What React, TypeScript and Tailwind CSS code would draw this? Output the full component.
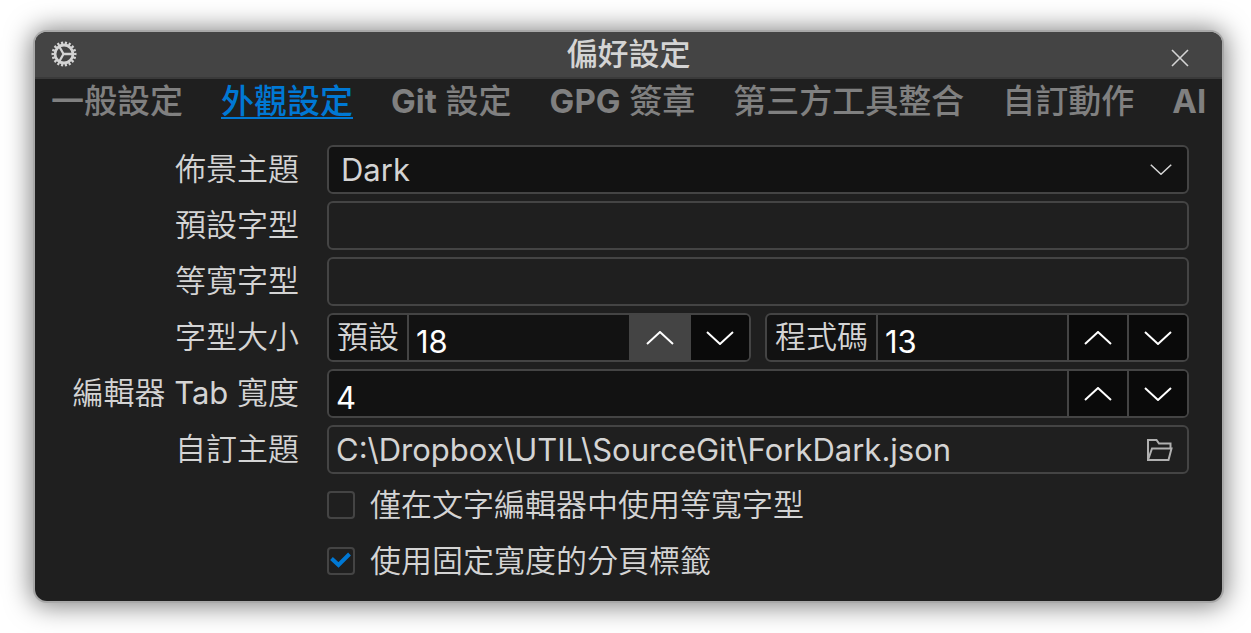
import { useState, type ReactNode } from 'react';

const TABS = ['一般設定', '外觀設定', 'Git 設定', 'GPG 簽章', '第三方工具整合', '自訂動作', 'AI'];

/* Latin words carry a heavier weight than the CJK text around them. */
function Mixed({ text, latin }: { text: string; latin: string }) {
  return (
    <>
      {text.split(/([A-Za-z]+)/).map((part, i) =>
        i % 2 ? (
          <span key={i} className={latin}>
            {part}
          </span>
        ) : (
          part
        ),
      )}
    </>
  );
}

function GearIcon() {
  return (
    <svg viewBox="0 0 26 26" className="size-[26px]" fill="none" stroke="currentColor" aria-hidden="true">
      <circle cx="13" cy="13" r="11" strokeWidth="3" pathLength="72" strokeDasharray="2.200 1.800" strokeDashoffset="1.100" />
      <circle cx="13" cy="13" r="9" strokeWidth="2.800" />
      <path d="M12.500 13H22M12.500 13L8 5M12.500 13L8 21" strokeWidth="2.300" />
    </svg>
  );
}

function Chevron({ up = false, small = false }: { up?: boolean; small?: boolean }) {
  return (
    <svg
      viewBox="0 0 28 14"
      className={small ? 'h-[11px] w-[22px]' : 'h-[14px] w-7'}
      fill="none"
      stroke="currentColor"
      strokeWidth="2"
      aria-hidden="true"
    >
      <path d={up ? 'M1 13L14 1L27 13' : 'M1 1L14 13L27 1'} />
    </svg>
  );
}

function FolderIcon() {
  return (
    <svg viewBox="0 0 26 22" className="h-[22px] w-[26px]" fill="none" stroke="currentColor" strokeWidth="2" aria-hidden="true">
      <path d="M1 21V1H9.500L12 4.500H23.500V9.500M1 21L5 9.500H24.500L21.500 21Z" />
    </svg>
  );
}

function Row({ id, label, children }: { id: string; label: string; children: ReactNode }) {
  return (
    <>
      <label htmlFor={id} className="pb-0.5 text-right font-[350] whitespace-nowrap">
        <Mixed text={label} latin="font-normal" />
      </label>
      {children}
    </>
  );
}

function Stepper({
  id,
  caption,
  initial,
  highlighted = false,
}: {
  id: string;
  caption?: string;
  initial: number;
  highlighted?: boolean;
}) {
  const [value, setValue] = useState(initial);
  return (
    <div className="flex h-[49px] min-w-0 flex-1 rounded-md border-2 border-[#444] bg-[#121212]">
      {caption && (
        <label htmlFor={id} className="shrink-0 border-r-2 border-[#444] px-2 font-[350] leading-[43px]">
          {caption}
        </label>
      )}
      <input
        id={id}
        inputMode="numeric"
        value={value}
        onChange={(e) => setValue(Number(e.target.value) || 0)}
        className="w-0 min-w-0 flex-1 bg-transparent px-[7px] pt-2 text-white outline-none"
      />
      <button
        type="button"
        aria-label="增加"
        onClick={() => setValue(value + 1)}
        className={`flex w-[60px] shrink-0 items-center justify-center border-l-2 border-[#444] text-white ${
          highlighted ? 'bg-[#444]' : 'bg-[#0a0a0a]'
        }`}
      >
        <Chevron up />
      </button>
      <button
        type="button"
        aria-label="減少"
        onClick={() => setValue(value - 1)}
        className="flex w-[60px] shrink-0 items-center justify-center rounded-r border-l-2 border-[#444] bg-[#0a0a0a] text-white"
      >
        <Chevron />
      </button>
    </div>
  );
}

function Check({ label, initial }: { label: string; initial: boolean }) {
  const [checked, setChecked] = useState(initial);
  return (
    <label className="col-start-2 flex h-[49px] items-center gap-[15px] pb-0.5 font-[350]">
      <span className="relative flex size-7">
        <input
          type="checkbox"
          checked={checked}
          onChange={(e) => setChecked(e.target.checked)}
          className="size-7 appearance-none rounded border-2 border-[#444]"
        />
        {checked && (
          <svg
            viewBox="0 0 28 28"
            className="pointer-events-none absolute inset-0 size-7 text-[#0078d4]"
            fill="none"
            stroke="currentColor"
            strokeWidth="4"
            aria-hidden="true"
          >
            <path d="M4.500 11.500L11.500 18L22.500 7" />
          </svg>
        )}
      </span>
      {label}
    </label>
  );
}

export default function App() {
  const [tab, setTab] = useState(TABS[1]);
  const [theme, setTheme] = useState('Dark');
  const [path, setPath] = useState('C:\\Dropbox\\UTIL\\SourceGit\\ForkDark.json');
  const field = 'h-[49px] w-full min-w-0 rounded-md border-2 border-[#444] px-[7px] outline-none';

  return (
    <div className="min-h-screen bg-white pt-8 pr-[29px] pb-8 pl-[35px] font-['Inter','Noto_Sans_CJK_TC',sans-serif] text-[31px] leading-10 text-[#d4d4d4]">
      <main className="overflow-hidden rounded-xl bg-[#1f1f1f] shadow-[0_0_0_2px_#a8a8a8,0_1px_26px_4px_rgba(0,0,0,0.5)]">
        <header className="grid h-[47px] grid-cols-[1fr_auto_1fr] items-center border-b-2 border-[#3a3a3a] bg-[#444] px-4 pb-0.5">
          <GearIcon />
          <h1 className="font-medium">偏好設定</h1>
          <button type="button" aria-label="關閉" className="mr-2 flex size-9 items-center justify-center justify-self-end pt-2">
            <svg viewBox="0 0 18 18" className="size-[18px]" fill="none" stroke="currentColor" strokeWidth="1.600" aria-hidden="true">
              <path d="M1 1L17 17M17 1L1 17" />
            </svg>
          </button>
        </header>

        <nav className="flex gap-[38px] pl-4 text-[33px] font-medium whitespace-nowrap">
          {TABS.map((name) => (
            <button
              key={name}
              type="button"
              aria-pressed={tab === name}
              onClick={() => setTab(name)}
              className={`h-10 shrink-0 border-b-2 pt-1.5 leading-8 ${
                tab === name ? 'border-[#0078d4] text-[#0078d4]' : 'border-transparent text-[#808080]'
              }`}
            >
              <Mixed text={name} latin="font-bold" />
            </button>
          ))}
        </nav>

        <form className="grid grid-cols-[264px_minmax(0,1fr)] items-center gap-x-7 gap-y-[7px] pt-[26px] pr-[33px] pb-[15px]">
          <Row id="theme" label="佈景主題">
            <div className="relative">
              <select
                id="theme"
                value={theme}
                onChange={(e) => setTheme(e.target.value)}
                className="block h-[49px] w-full appearance-none rounded-md border-2 border-[#444] bg-[#121212] px-3 outline-none"
              >
                <option>Dark</option>
              </select>
              <span className="pointer-events-none absolute inset-y-0 right-[17px] flex items-center">
                <Chevron small />
              </span>
            </div>
          </Row>
          <Row id="default-font" label="預設字型">
            <input id="default-font" className={field} />
          </Row>
          <Row id="mono-font" label="等寬字型">
            <input id="mono-font" className={field} />
          </Row>
          <Row id="size-default" label="字型大小">
            <div className="flex gap-[14px]">
              <Stepper id="size-default" caption="預設" initial={18} highlighted />
              <Stepper id="size-code" caption="程式碼" initial={13} />
            </div>
          </Row>
          <Row id="tab-width" label="編輯器 Tab 寬度">
            <Stepper id="tab-width" initial={4} />
          </Row>
          <Row id="custom-theme" label="自訂主題">
            <div className="flex h-[49px] items-center rounded-md border-2 border-[#444]">
              <input
                id="custom-theme"
                value={path}
                onChange={(e) => setPath(e.target.value)}
                className="min-w-0 flex-1 bg-transparent px-[7px] outline-none"
              />
              <button type="button" aria-label="瀏覽" className="flex w-[54px] items-center justify-center self-stretch text-[#b0b0b0]">
                <FolderIcon />
              </button>
            </div>
          </Row>
          <Check label="僅在文字編輯器中使用等寬字型" initial={false} />
          <Check label="使用固定寬度的分頁標籤" initial />
        </form>
      </main>
    </div>
  );
}
